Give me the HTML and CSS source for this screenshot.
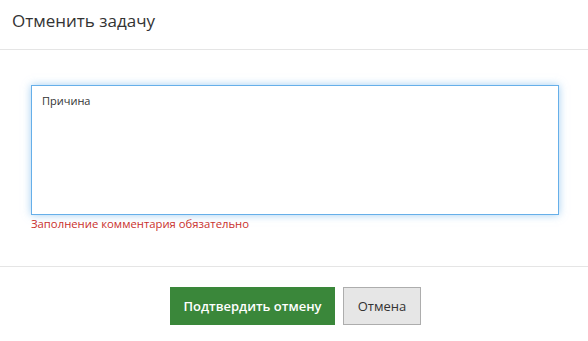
FILE: index.html
```html
<!DOCTYPE html>
<html lang="ru">
<head>
<meta charset="utf-8">
<link rel="stylesheet" href="styles.css">
</head>
<body>
<div class="modal">
  <div class="modal-header">
    <h4 class="modal-title">Отменить задачу</h4>
  </div>
  <div class="modal-body">
    <textarea class="reason" placeholder="Причина"></textarea>
    <div class="error">Заполнение комментария обязательно</div>
  </div>
  <div class="modal-footer">
    <button class="btn btn-confirm">Подтвердить отмену</button>
    <button class="btn btn-cancel">Отмена</button>
  </div>
</div>
</body>
</html>
```
FILE: styles.css
```css
html, body {
  margin: 0;
  padding: 0;
  background: #fff;
}
body {
  font-family: "Open Sans", "Noto Sans", sans-serif;
  color: #333;
  width: 588px;
  height: 341px;
  overflow: hidden;
}
.modal-header {
  height: 49px;
  border-bottom: 1px solid #e5e5e5;
  display: flex;
  align-items: center;
  padding: 0 12px;
}
.modal-title {
  margin: 0;
  font-size: 17px;
  font-weight: 400;
  color: #333;
  position: relative;
  top: -4px;
}
.modal-body {
  padding: 35px 29px 0 31px;
  height: 217px;
  box-sizing: border-box;
  border-bottom: 1px solid #e5e5e5;
}
.reason {
  display: block;
  width: 528px;
  height: 130px;
  box-sizing: border-box;
  margin: 0;
  border: 1px solid #66afe9;
  box-shadow: 0 0 8px rgba(102, 175, 233, 0.6);
  outline: none;
  resize: none;
  padding: 7px 10px;
  font-family: "Open Sans", "Noto Sans", sans-serif;
  font-size: 11px;
  color: #333;
}
.reason::placeholder {
  color: #333;
  opacity: 1;
}
.error {
  margin-top: 1px;
  font-size: 11.3px;
  line-height: 16px;
  color: #c9302c;
}
.modal-footer {
  display: flex;
  justify-content: center;
  gap: 8px;
  padding: 20px 0 0 3px;
}
.btn {
  height: 38px;
  box-sizing: border-box;
  font-family: "Open Sans", "Noto Sans", sans-serif;
  font-size: 13px;
  border-radius: 0;
  padding: 0;
  margin: 0;
  white-space: nowrap;
}
.btn-confirm {
  width: 165px;
  background: #3a873a;
  color: #fff;
  font-weight: 600;
  border: 1px solid #3a873a;
}
.btn-cancel {
  width: 78px;
  background: #e6e6e6;
  color: #333;
  border: 1px solid #adadad;
}
```
